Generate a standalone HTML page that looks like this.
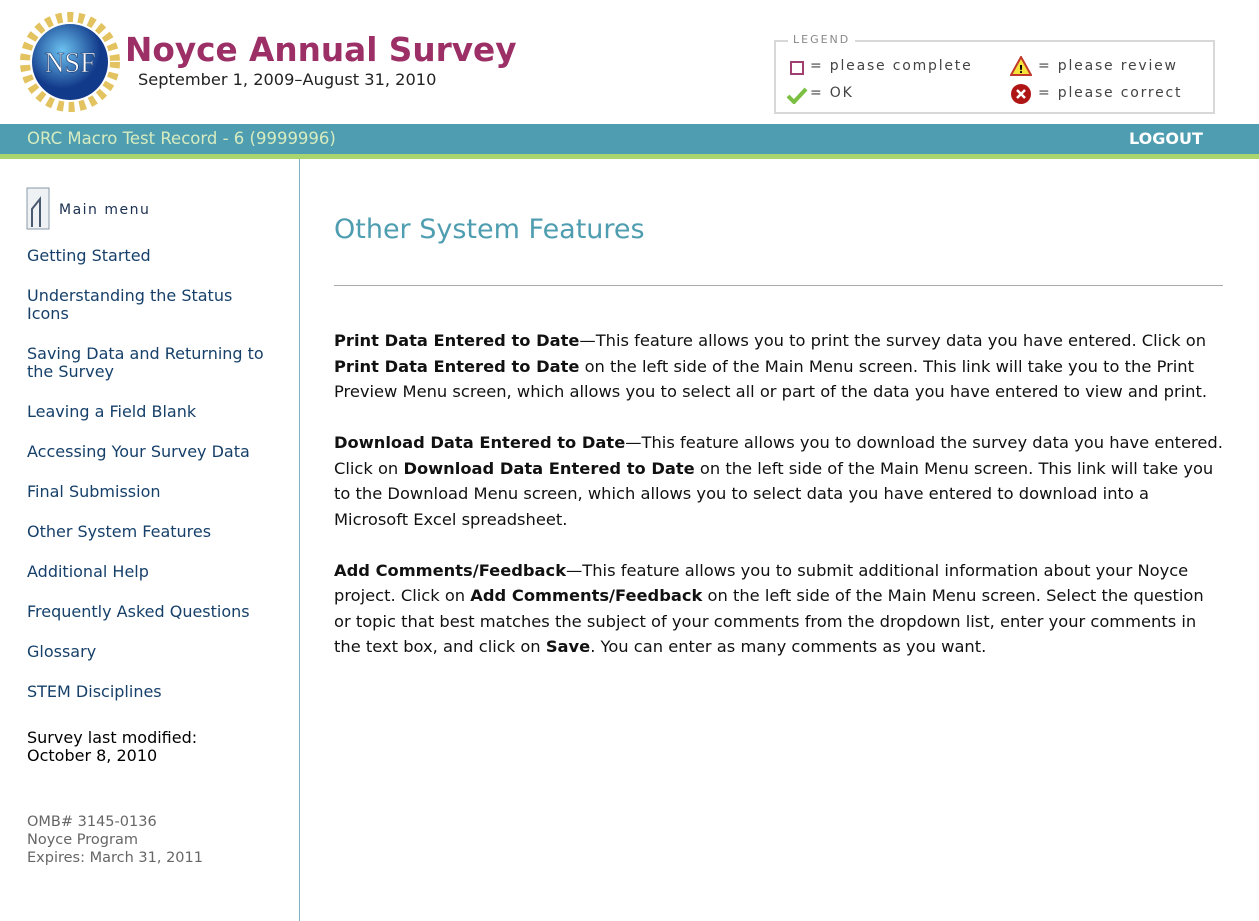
<!DOCTYPE html>
<html><head><style>
*{margin:0;padding:0;box-sizing:border-box}
body{width:1259px;height:921px;background:#fff;font-family:"DejaVu Sans","Liberation Sans",sans-serif;position:relative;overflow:hidden}
.abs{position:absolute}
.title{left:125px;top:31px;font:bold 32.7px "DejaVu Sans",sans-serif;color:#9b2f66}
.date{left:138px;top:70px;font-size:16.2px;color:#222}
.legend{left:774px;top:40px;width:441px;height:74px;border:2px solid #d8d8d8}
.lg{font-size:14px;color:#444;letter-spacing:1.8px;position:absolute}
.bar{left:0;top:124px;width:1259px;height:30px;background:#4f9db0}
.green{left:0;top:154px;width:1259px;height:5px;background:#a9d56e}
.nav a{position:absolute;left:27px;color:#16406a;font-size:16px;text-decoration:none;line-height:18px;width:245px}
.main p{font-size:16.3px;line-height:25.5px;color:#111;margin-bottom:25.5px}
</style></head><body>
<svg class="abs" style="left:20px;top:12px" width="100" height="100" viewBox="0 0 100 100">
<circle cx="50" cy="50" r="45" fill="none" stroke="#e3c260" stroke-width="10" stroke-dasharray="6 5"/>
<defs><radialGradient id="g" cx="40%" cy="35%"><stop offset="0" stop-color="#6cc2f0"/><stop offset="1" stop-color="#123a8a"/></radialGradient></defs>
<circle cx="50" cy="50" r="38" fill="url(#g)"/>
<text x="50" y="60" text-anchor="middle" font-family="Liberation Serif,serif" font-size="28" fill="#fff" stroke="#1a3a70" stroke-width=".6">NSF</text>
</svg>
<div class="abs title">Noyce Annual Survey</div>
<div class="abs date">September 1, 2009–August 31, 2010</div>
<div class="abs legend">
<div class="abs" style="left:12px;top:-9px;background:#fff;padding:0 5px;font-size:11px;color:#888;letter-spacing:2px">LEGEND</div>
<div class="abs" style="left:14px;top:19px;width:14px;height:14px;border:2px solid #a04070"></div>
<div class="lg" style="left:34px;top:16px">= please complete</div>
<svg class="abs" style="left:10px;top:44px" width="22" height="18"><path d="M2 10 L8 16 L20 3" stroke="#7bc043" stroke-width="4" fill="none"/></svg>
<div class="lg" style="left:34px;top:43px">= OK</div>
<svg class="abs" style="left:234px;top:14px" width="22" height="20"><path d="M11 1 L21 19 L1 19Z" fill="#f5e23a" stroke="#c0392b" stroke-width="2"/><text x="11" y="17" font-size="11" text-anchor="middle" fill="#000" font-weight="bold">!</text></svg>
<div class="lg" style="left:262px;top:16px">= please review</div>
<svg class="abs" style="left:234px;top:41px" width="22" height="22"><circle cx="11" cy="11" r="10" fill="#b01515"/><path d="M7 7 L15 15 M15 7 L7 15" stroke="#fff" stroke-width="2.5"/></svg>
<div class="lg" style="left:262px;top:43px">= please correct</div>
</div>
<div class="abs bar"></div>
<div class="abs" style="left:27px;top:129px;font-size:16.5px;color:#d6ecc0">ORC Macro Test Record - 6 (9999996)</div>
<div class="abs" style="left:1129px;top:129px;font:bold 16px 'DejaVu Sans',sans-serif;color:#fff">LOGOUT</div>
<div class="abs green"></div>
<div class="abs" style="left:299px;top:159px;width:1px;height:762px;background:#7fb2c0"></div>
<svg class="abs" style="left:26px;top:187px" width="24" height="43"><rect x="1" y="1" width="22" height="41" fill="#eef2f5" stroke="#8a98a8"/><path d="M6 40 V22 L14 12 V40" fill="none" stroke="#4a5a70" stroke-width="2"/></svg>
<div class="abs" style="left:59px;top:202px;font-size:14px;color:#1a3050;letter-spacing:1.5px">Main menu</div>
<div class="nav">
<a style="top:247px">Getting Started</a>
<a style="top:287px;width:230px">Understanding the Status Icons</a>
<a style="top:345px">Saving Data and Returning to the Survey</a>
<a style="top:403px">Leaving a Field Blank</a>
<a style="top:443px">Accessing Your Survey Data</a>
<a style="top:483px">Final Submission</a>
<a style="top:523px">Other System Features</a>
<a style="top:563px">Additional Help</a>
<a style="top:603px">Frequently Asked Questions</a>
<a style="top:643px">Glossary</a>
<a style="top:683px">STEM Disciplines</a>
</div>
<div class="abs" style="left:27px;top:729px;font-size:16px;line-height:18px;color:#000">Survey last modified:<br>October 8, 2010</div>
<div class="abs" style="left:27px;top:813px;font-size:14.5px;line-height:18px;color:#666">OMB# 3145-0136<br>Noyce Program<br>Expires: March 31, 2011</div>
<div class="abs" style="left:334px;top:214px;font-size:27px;color:#4f9db0">Other System Features</div>
<div class="abs" style="left:334px;top:285px;width:889px;height:1px;background:#aaa"></div>
<div class="abs main" style="left:334px;top:328px;width:889px">
<p><b>Print Data Entered to Date</b>—This feature allows you to print the survey data you have entered. Click on <b>Print Data Entered to Date</b> on the left side of the Main Menu screen. This link will take you to the Print Preview Menu screen, which allows you to select all or part of the data you have entered to view and print.</p>
<p><b>Download Data Entered to Date</b>—This feature allows you to download the survey data you have entered. Click on <b>Download Data Entered to Date</b> on the left side of the Main Menu screen. This link will take you to the Download Menu screen, which allows you to select data you have entered to download into a Microsoft Excel spreadsheet.</p>
<p><b>Add Comments/Feedback</b>—This feature allows you to submit additional information about your Noyce project. Click on <b>Add Comments/Feedback</b> on the left side of the Main Menu screen. Select the question or topic that best matches the subject of your comments from the dropdown list, enter your comments in the text box, and click on <b>Save</b>. You can enter as many comments as you want.</p>
</div>
</body></html>
